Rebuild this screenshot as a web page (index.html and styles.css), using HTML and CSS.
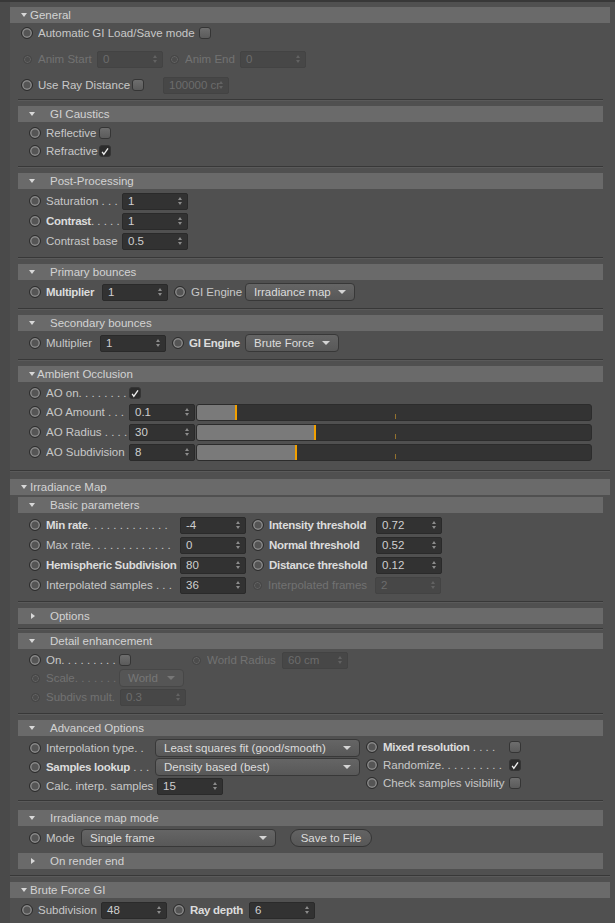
FILE: index.html
```html
<!DOCTYPE html>
<html lang="en">
<head>
  <meta charset="UTF-8" />
  <title>Global Illumination</title>
  <link rel="stylesheet" href="styles.css">
</head>
<body>
<div class="panel">
  <div class="topline"></div>

  <!-- General -->
  <section class="group">
    <div class="ghead">General</div>
    <div class="rows loose">
      <div class="row">
        <span class="radio"></span><span class="lbl w161">Automatic GI Load/Save mode</span><span class="chk"></span>
      </div>
      <div class="row">
        <span class="radio sm"></span><span class="lbl dim w59">Anim Start</span><span class="num off">0</span>
        <span class="radio sm"></span><span class="lbl dim w55">Anim End</span><span class="num off">0</span>
      </div>
      <div class="row">
        <span class="radio"></span><span class="lbl w94">Use Ray Distance</span><span class="chk"></span><span class="num off">100000 cr</span>
      </div>
    </div>

    <div class="sub">
      <div class="sep mt4"></div>
      <div class="shead">GI Caustics</div>
      <div class="rows">
        <div class="row h18"><span class="radio"></span><span class="lbl w53">Reflective</span><span class="chk"></span></div>
        <div class="row h18"><span class="radio"></span><span class="lbl w53">Refractive</span><span class="chk on"><svg viewBox="0 0 12 12"><path d="M2.6 6.4 L4.6 9.4 L9.6 2.2" /></svg></span></div>
      </div>

      <div class="sep"></div>
      <div class="shead">Post-Processing</div>
      <div class="rows">
        <div class="row"><span class="radio"></span><span class="lbl w76">Saturation . . .</span><span class="num">1</span></div>
        <div class="row"><span class="radio"></span><span class="lbl w76"><b class="b">Contrast</b>. . . . .</span><span class="num">1</span></div>
        <div class="row"><span class="radio"></span><span class="lbl w76">Contrast base</span><span class="num">0.5</span></div>
      </div>

      <div class="sep"></div>
      <div class="shead">Primary bounces</div>
      <div class="rows">
        <div class="row">
          <span class="radio"></span><span class="lbl b w56">Multiplier</span><span class="num">1</span>
          <span class="radio"></span><span class="lbl w54">GI Engine</span><span class="drop w110">Irradiance map</span>
        </div>
      </div>

      <div class="sep"></div>
      <div class="shead">Secondary bounces</div>
      <div class="rows">
        <div class="row">
          <span class="radio"></span><span class="lbl w54">Multiplier</span><span class="num">1</span>
          <span class="radio"></span><span class="lbl b w56">GI Engine</span><span class="drop w94">Brute Force</span>
        </div>
      </div>

      <div class="sep"></div>
      <div class="shead tight">Ambient Occlusion</div>
      <div class="rows">
        <div class="row h18"><span class="radio"></span><span class="lbl w83">AO on. . . . . . . .</span><span class="chk on"><svg viewBox="0 0 12 12"><path d="M2.6 6.4 L4.6 9.4 L9.6 2.2" /></svg></span></div>
        <div class="row"><span class="radio"></span><span class="lbl w83">AO Amount . . .</span><span class="num">0.1</span><span class="slider"><span class="fill" style="width:40px"></span></span></div>
        <div class="row"><span class="radio"></span><span class="lbl w83">AO Radius . . . .</span><span class="num">30</span><span class="slider"><span class="fill" style="width:119px"></span></span></div>
        <div class="row"><span class="radio"></span><span class="lbl w83">AO Subdivision</span><span class="num">8</span><span class="slider"><span class="fill" style="width:100px"></span></span></div>
      </div>
    </div>
  </section>

  <div class="gsep mt8"></div>

  <!-- Irradiance Map -->
  <section class="group">
    <div class="ghead mt7">Irradiance Map</div>
    <div class="sub">
      <div class="shead mt2">Basic parameters</div>
      <div class="rows">
        <div class="row">
          <span class="radio"></span><span class="lbl w134"><b class="b">Min rate</b>. . . . . . . . . . . . .</span><span class="num">-4</span>
          <span class="radio"></span><span class="lbl b w107">Intensity threshold</span><span class="num">0.72</span>
        </div>
        <div class="row">
          <span class="radio"></span><span class="lbl w134">Max rate. . . . . . . . . . . . .</span><span class="num">0</span>
          <span class="radio"></span><span class="lbl b w107">Normal threshold</span><span class="num">0.52</span>
        </div>
        <div class="row">
          <span class="radio"></span><span class="lbl b w134">Hemispheric Subdivision</span><span class="num">80</span>
          <span class="radio"></span><span class="lbl b w107">Distance threshold</span><span class="num">0.12</span>
        </div>
        <div class="row">
          <span class="radio"></span><span class="lbl w134">Interpolated samples . . .</span><span class="num">36</span>
          <span class="radio sm"></span><span class="lbl dim w107">Interpolated frames</span><span class="num off">2</span>
        </div>
      </div>

      <div class="sep"></div>
      <div class="shead closed">Options</div>

      <div class="sep mt4"></div>
      <div class="shead mt3">Detail enhancement</div>
      <div class="rows">
        <div class="row h18">
          <span class="cell c161"><span class="radio"></span><span class="lbl w73">On. . . . . . . . .</span><span class="chk"></span></span>
          <span class="radio sm"></span><span class="lbl dim w75">World Radius</span><span class="num off">60 cm</span>
        </div>
        <div class="row h18"><span class="radio sm"></span><span class="lbl dim w73">Scale. . . . . . .</span><span class="drop off w65">World</span></div>
        <div class="row"><span class="radio sm"></span><span class="lbl dim w74">Subdivs mult.</span><span class="num off">0.3</span></div>
      </div>

      <div class="sep"></div>
      <div class="shead">Advanced Options</div>
      <div class="cols">
        <div class="rows left">
          <div class="row h19"><span class="radio"></span><span class="lbl w109">Interpolation type. .</span><span class="drop w205">Least squares fit (good/smooth)</span></div>
          <div class="row h19"><span class="radio"></span><span class="lbl w109"><b class="b">Samples lookup</b> . . .</span><span class="drop w205">Density based (best)</span></div>
          <div class="row"><span class="radio"></span><span class="lbl w111">Calc. interp. samples</span><span class="num">15</span></div>
        </div>
        <div class="rows right">
          <div class="row h18"><span class="radio"></span><span class="lbl w126"><b class="b">Mixed resolution</b> . . . .</span><span class="chk"></span></div>
          <div class="row h18"><span class="radio"></span><span class="lbl w126">Randomize. . . . . . . . . .</span><span class="chk on"><svg viewBox="0 0 12 12"><path d="M2.6 6.4 L4.6 9.4 L9.6 2.2" /></svg></span></div>
          <div class="row h18"><span class="radio"></span><span class="lbl w126">Check samples visibility</span><span class="chk"></span></div>
        </div>
      </div>

      <div class="sep mt4"></div>
      <div class="shead mt8">Irradiance map mode</div>
      <div class="rows">
        <div class="row"><span class="radio"></span><span class="lbl w35">Mode</span><span class="drop w195">Single frame</span><span class="btn">Save to File</span></div>
      </div>
      <div class="shead closed">On render end</div>
    </div>
  </section>

  <div class="gsep"></div>

  <!-- Brute Force GI -->
  <section class="group">
    <div class="ghead">Brute Force GI</div>
    <div class="rows">
      <div class="row">
        <span class="radio"></span><span class="lbl w63">Subdivision</span><span class="num">48</span>
        <span class="radio"></span><span class="lbl b w59">Ray depth</span><span class="num">6</span>
      </div>
    </div>
  </section>
</div>
</body>
</html>
```

FILE: styles.css
```css
* {
  margin: 0;
  padding: 0;
  box-sizing: border-box;
}

body {
  width: 615px;
  height: 923px;
  overflow: hidden;
  background: linear-gradient(to right, #4a4a4a 10px, #505050 10px);
  font-family: "Liberation Sans", Arial, sans-serif;
  font-size: 11.5px;
  color: #c8c8c8;
}

.panel {
  display: flex;
  flex-direction: column;
}

.topline {
  height: 2px;
  background: #383838;
}

/* groups and headers */

.group {
  display: flex;
  flex-direction: column;
  margin-left: 10px;
  width: 600px;
}

.sub {
  display: flex;
  flex-direction: column;
  margin-left: 8px;
  width: 585px;
}

.ghead,
.shead {
  height: 16px;
  margin-top: 5px;
  background: #6a6a6a;
  color: #d3d3d3;
  display: flex;
  align-items: center;
  padding-left: 11px;
  flex: none;
}

.ghead::before,
.shead::before {
  content: "";
  border-left: 3px solid transparent;
  border-right: 3px solid transparent;
  border-top: 4px solid #d8d8d8;
  margin-right: 3px;
}

.shead::before {
  margin-right: 15px;
}

.shead.tight::before {
  margin-right: 2px;
}

.shead.closed::before {
  border-top: 3.5px solid transparent;
  border-bottom: 3.5px solid transparent;
  border-left: 4px solid #d8d8d8;
  border-right: 0;
  margin-left: 2px;
  margin-right: 15px;
}

.sep,
.gsep {
  height: 2px;
  margin-top: 6px;
  border-top: 1px solid #383838;
  border-bottom: 1px solid #5a5a5a;
  flex: none;
}

.gsep {
  margin-left: 10px;
  width: 600px;
}

.mt2 { margin-top: 2px; }
.mt3 { margin-top: 3px; }
.mt4 { margin-top: 4px; }
.mt7 { margin-top: 7px; }
.mt8 { margin-top: 8px; }

/* rows */

.rows {
  display: flex;
  flex-direction: column;
  padding-left: 11px;
  margin-top: 2px;
}

.rows.loose {
  gap: 6px;
  margin-top: 0;
}

.row {
  display: flex;
  align-items: center;
  height: 20px;
  flex: none;
}

.row.h18 { height: 18px; }
.row.h19 { height: 19px; }

.cols {
  display: flex;
}

.cols .left {
  width: 342px;
}

.cols .right {
  padding-left: 6px;
}

.cell {
  display: flex;
  align-items: center;
  flex: none;
}

.c161 { width: 161px; }

/* labels */

.lbl {
  flex: none;
  white-space: nowrap;
  overflow: hidden;
}

.b {
  font-weight: bold;
  color: #dcdcdc;
  letter-spacing: -0.3px;
}

.dim {
  color: #727272;
}

.w35 { width: 35px; }
.w53 { width: 53px; }
.w54 { width: 54px; }
.w55 { width: 55px; }
.w56 { width: 56px; }
.w59 { width: 59px; }
.w63 { width: 63px; }
.w65 { width: 65px; }
.w73 { width: 73px; }
.w74 { width: 74px; }
.w75 { width: 75px; }
.w76 { width: 76px; }
.w83 { width: 83px; }
.w94 { width: 94px; }
.w107 { width: 107px; }
.w109 { width: 109px; }
.w110 { width: 110px; }
.w111 { width: 111px; }
.w126 { width: 126px; }
.w134 { width: 134px; }
.w161 { width: 161px; }
.w195 { width: 195px; }
.w205 { width: 205px; }

/* controls */

.radio {
  width: 12px;
  height: 12px;
  flex: none;
  border-radius: 50%;
  margin-right: 5px;
  border: 1px solid #2c2c2c;
  background: #555;
  box-shadow: inset 0 0 0 1.5px #8a8a8a;
}

.radio.sm {
  width: 9px;
  height: 9px;
  margin: 0 6px 0 2px;
  border-color: #454545;
  background: #4c4c4c;
  box-shadow: inset 0 0 0 1px #636363;
}

.num + .radio,
.drop + .radio {
  margin-left: 6px;
}

.num + .radio.sm {
  margin-left: 7px;
}

.chk {
  width: 12px;
  height: 12px;
  flex: none;
  border-radius: 3px;
  border: 1px solid #353535;
  background: linear-gradient(#6e6e6e, #5b5b5b);
  display: flex;
  align-items: center;
  justify-content: center;
}

.chk.on {
  background: #2c2c2c;
}

.chk svg {
  width: 11px;
  height: 11px;
}

.chk path {
  fill: none;
  stroke: #eeeeee;
  stroke-width: 1.7;
}

.chk + .num {
  margin-left: 19px;
}

.num {
  position: relative;
  flex: none;
  width: 66px;
  height: 17px;
  padding-left: 5px;
  line-height: 15px;
  background: #323232;
  border: 1px solid #2a2a2a;
  border-radius: 2px;
  color: #cfcfcf;
}

.num::before,
.num::after {
  content: "";
  position: absolute;
  right: 5px;
  border-left: 2.5px solid transparent;
  border-right: 2.5px solid transparent;
}

.num::before {
  top: 3px;
  border-bottom: 3.5px solid #8c8c8c;
}

.num::after {
  top: 8px;
  border-top: 3.5px solid #8c8c8c;
}

.num.off {
  background: #474747;
  border-color: #434343;
  color: #6c6c6c;
}

.num.off::before { border-bottom-color: #626262; }
.num.off::after { border-top-color: #626262; }

.drop {
  position: relative;
  flex: none;
  height: 18px;
  padding-left: 8px;
  line-height: 16px;
  background: linear-gradient(#656565, #585858);
  border: 1px solid #383838;
  border-radius: 4px;
  color: #dcdcdc;
  white-space: nowrap;
}

.drop::after {
  content: "";
  position: absolute;
  right: 8px;
  top: 6px;
  border-left: 4px solid transparent;
  border-right: 4px solid transparent;
  border-top: 4px solid #d4d4d4;
}

.drop.off {
  background: #555;
  border-color: #474747;
  color: #777;
}

.drop.off::after {
  border-top-color: #777;
}

.btn {
  flex: none;
  width: 82px;
  height: 18px;
  margin-left: 14px;
  border: 1px solid #353535;
  border-radius: 9px;
  background: linear-gradient(#636363, #575757);
  color: #dcdcdc;
  text-align: center;
  line-height: 16px;
}

.slider {
  position: relative;
  flex: none;
  width: 396px;
  height: 17px;
  margin-left: 1px;
  background: #333;
  border: 1px solid #2c2c2c;
  border-radius: 3px;
  overflow: hidden;
}

.slider .fill {
  display: block;
  height: 100%;
  background: #7a7a7a;
  border-right: 2px solid #f2a000;
}

.slider::after {
  content: "";
  position: absolute;
  left: 198px;
  bottom: 1px;
  width: 1px;
  height: 5px;
  background: #94722e;
}
```
